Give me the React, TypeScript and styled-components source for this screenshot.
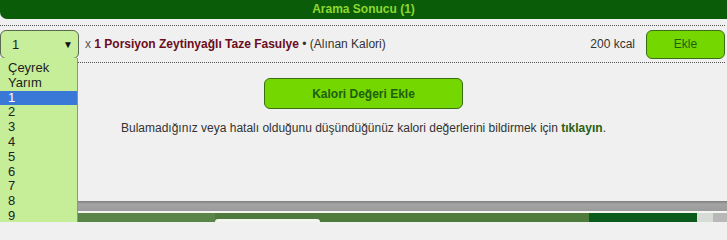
import { createGlobalStyle } from "styled-components";
import styled from "styled-components";

const GlobalStyle = createGlobalStyle`
  html, body {
    margin: 0;
    padding: 0;
    background: #f0f0f0;
    font-family: "Liberation Sans", Arial, sans-serif;
  }
`;

const Page = styled.div`
  position: relative;
  width: 727px;
  height: 222px;
  overflow: hidden;
  background: #f0f0f0;
`;

const Header = styled.div`
  height: 19px;
  line-height: 19px;
  background: #0a5c08;
  border-bottom-left-radius: 7px;
  color: #8ed82e;
  font-size: 12px;
  font-weight: 700;
  text-align: center;
`;

const Panel = styled.div`
  height: 182px;
  padding-top: 6px;
  box-sizing: border-box;
  background: #f0f0f0;
`;

const ItemRow = styled.div`
  display: flex;
  align-items: center;
  height: 38px;
  box-sizing: border-box;
  border-top: 1px dotted #555;
  border-bottom: 1px dotted #555;
  margin-right: 2px;
  font-size: 12px;
  color: #333;
`;

const SelectBox = styled.div`
  display: flex;
  align-items: center;
  justify-content: space-between;
  width: 79px;
  height: 29px;
  box-sizing: border-box;
  padding: 0 5px 0 11px;
  border: 1px solid #5a6a50;
  border-radius: 6px;
  background: #c7ee9b;
  font-size: 13px;
  color: #222;
`;

const Caret = styled.span`
  font-size: 10px;
  color: #111;
`;

const ItemText = styled.div`
  margin-left: 6px;
  flex: 1;
  white-space: nowrap;
`;

const Times = styled.span`
  color: #555;
`;

const FoodName = styled.b`
  color: #6a0c1c;
`;

const Kcal = styled.span`
  margin-right: 11px;
  color: #333;
`;

const GreenButton = styled.button<{ $w: number; $h: number; $bold?: boolean }>`
  width: ${(p) => p.$w}px;
  height: ${(p) => p.$h}px;
  padding: 0;
  border: 1px solid #3a6e16;
  border-radius: 6px;
  background-color: #74d800;
  color: #205f0e;
  font-family: "Liberation Sans", Arial, sans-serif;
  font-size: 12px;
  font-weight: ${(p) => (p.$bold ? 700 : 400)};
  cursor: pointer;
`;

const Center = styled.div`
  display: flex;
  flex-direction: column;
  align-items: center;
  padding-top: 15px;
`;

const Note = styled.p`
  margin: 12px 0 0;
  font-size: 12px;
  line-height: 14px;
  color: #333;
`;

const NoteLink = styled.b`
  color: #2a5e12;
`;

const GrayBar = styled.div`
  height: 10px;
  background: linear-gradient(#7d7d7d, #a3a3a3 30%, #9c9c9c);
`;

const WhiteLine = styled.div`
  height: 2px;
  background: #f4f4f0;
`;

const Footer = styled.div`
  display: flex;
  height: 9px;
  background: #4f7a3e;
`;

const FooterPart = styled.div<{ $w: number; $bg: string; $round?: boolean }>`
  width: ${(p) => p.$w}px;
  background: ${(p) => p.$bg};
  border-radius: ${(p) => (p.$round ? "8px 8px 0 0" : "0")};
  margin-top: ${(p) => (p.$round ? "6px" : "0")};
`;

const DropList = styled.ul`
  position: absolute;
  left: 0;
  top: 58px;
  bottom: 0;
  width: 78px;
  margin: 0;
  padding: 3px 0 0;
  box-sizing: border-box;
  list-style: none;
  background: #c6ee98;
  border-right: 1px solid #8a9a80;
  font-size: 13px;
  line-height: 14.8px;
  color: #222;
`;

const DropItem = styled.li<{ $active?: boolean }>`
  padding-left: 8px;
  background: ${(p) => (p.$active ? "#3a78d8" : "transparent")};
  color: ${(p) => (p.$active ? "#fff" : "#222")};
`;

const options = ["Çeyrek", "Yarım", "1", "2", "3", "4", "5", "6", "7", "8", "9"];

export default function App() {
  return (
    <Page>
      <GlobalStyle />
      <Header>Arama Sonucu (1)</Header>
      <Panel>
        <ItemRow>
          <SelectBox>
            <span>1</span>
            <Caret>▼</Caret>
          </SelectBox>
          <ItemText>
            <Times>x </Times>
            <FoodName>1 Porsiyon Zeytinyağlı Taze Fasulye</FoodName> • (Alınan Kalori)
          </ItemText>
          <Kcal>200 kcal</Kcal>
          <GreenButton $w={79} $h={29}>
            Ekle
          </GreenButton>
        </ItemRow>
        <Center>
          <GreenButton $w={199} $h={31} $bold>
            Kalori Değeri Ekle
          </GreenButton>
          <Note>
            Bulamadığınız veya hatalı olduğunu düşündüğünüz kalori değerlerini bildirmek için{" "}
            <NoteLink>tıklayın</NoteLink>.
          </Note>
        </Center>
      </Panel>
      <GrayBar />
      <WhiteLine />
      <Footer>
        <FooterPart $w={215} $bg="#5a8549" />
        <FooterPart $w={105} $bg="#f2f4ee" $round />
        <FooterPart $w={269} $bg="#4e7a3c" />
        <FooterPart $w={108} $bg="#0a5a1c" />
        <FooterPart $w={16} $bg="#d8dcd6" />
        <FooterPart $w={14} $bg="#b8b8b8" />
      </Footer>
      <DropList>
        {options.map((o) => (
          <DropItem key={o} $active={o === "1"}>
            {o}
          </DropItem>
        ))}
      </DropList>
    </Page>
  );
}
